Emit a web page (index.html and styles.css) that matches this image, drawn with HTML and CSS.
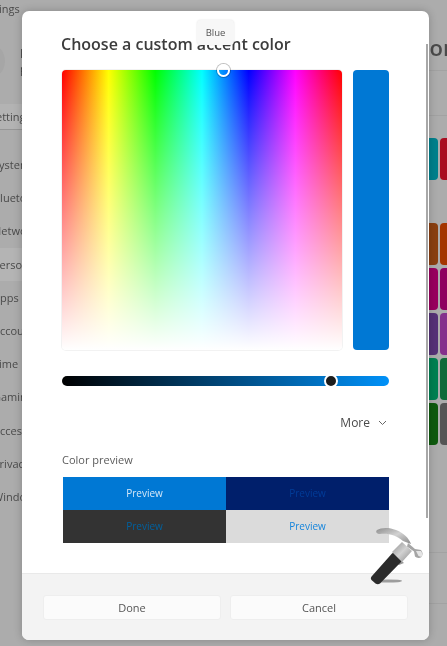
FILE: index.html
```html
<!doctype html>
<html lang="en">
<head>
    <meta charset="UTF-8">
    <title>Choose a custom accent color</title>
    <link rel="stylesheet" href="styles.css">
</head>
<body>

<div class="settings">
    <div class="side">
        <div class="app-title">Settings</div>
        <div class="profile">
            <div class="avatar"></div>
            <div class="profile-text">
                <div class="profile-name">Pat</div>
                <div class="profile-mail">pat@mail</div>
            </div>
        </div>
        <div class="search">Find a setting</div>
        <div class="nav">
            <div class="nav-item">System</div>
            <div class="nav-item">Bluetooth</div>
            <div class="nav-item">Network</div>
            <div class="nav-item active">Personalization</div>
            <div class="nav-item">Apps</div>
            <div class="nav-item">Accounts</div>
            <div class="nav-item">Time</div>
            <div class="nav-item">Gaming</div>
            <div class="nav-item">Access</div>
            <div class="nav-item">Privacy</div>
            <div class="nav-item">Windows</div>
        </div>
    </div>
    <div class="main">
        <div class="page-title">Colors</div>
        <div class="row-top"></div>
        <div class="swatches first">
            <div class="swatch" style="background: #00808c"></div>
            <div class="swatch" style="background: #a80d20"></div>
        </div>
        <div class="swatches">
            <div class="swatch" style="background: #8a3f10"></div>
            <div class="swatch" style="background: #a43500"></div>
            <div class="swatch" style="background: #99005f"></div>
            <div class="swatch" style="background: #8e0060"></div>
            <div class="swatch" style="background: #553177"></div>
            <div class="swatch" style="background: #84308c"></div>
            <div class="swatch" style="background: #008051"></div>
            <div class="swatch" style="background: #0f6a3a"></div>
            <div class="swatch" style="background: #0e5a0e"></div>
            <div class="swatch" style="background: #555555"></div>
        </div>
        <div class="option first-option">Show accent color on Start and taskbar</div>
        <div class="option">Show on title bars and windows borders</div>
    </div>
</div>

<div class="dialog">
    <div class="dialog-body">
        <h2 class="dialog-title">Choose a custom accent color</h2>
        <div class="picker">
            <div class="spectrum">
                <div class="spectrum-thumb"></div>
            </div>
            <div class="current"></div>
        </div>
        <div class="value-slider">
            <div class="value-thumb"></div>
        </div>
        <div class="more">
            <span>More</span>
            <svg class="chevron" width="9" height="6" viewBox="0 0 9 6">
                <path d="M1 1l3.5 3.5L8 1" fill="none" stroke="#666" stroke-width="1"/>
            </svg>
        </div>
        <div class="preview-label">Color preview</div>
        <div class="preview">
            <div class="cell cell-accent">Preview</div>
            <div class="cell cell-navy">Preview</div>
            <div class="cell cell-dark">Preview</div>
            <div class="cell cell-light">Preview</div>
        </div>
    </div>
    <div class="dialog-footer">
        <button class="btn">Done</button>
        <button class="btn">Cancel</button>
    </div>
    <div class="scrollbar"></div>
    <div class="tooltip">Blue</div>
</div>

<!-- hammer watermark -->
<svg class="hammer" width="64" height="62" viewBox="0 0 64 62">
    <defs>
        <linearGradient id="steel" x1="0" y1="0" x2="1" y2="1">
            <stop offset="0" stop-color="#8d8d8d"/>
            <stop offset="0.5" stop-color="#d2d2d2"/>
            <stop offset="1" stop-color="#8a8a8a"/>
        </linearGradient>
    </defs>
    <ellipse cx="20" cy="55" rx="14" ry="1.6" fill="#555" opacity="0.55"/>
    <path d="M28 30l8 7-5 2-6-5z" fill="#9a9a9a"/>
    <path d="M4 50L24 27.500c2-1.500 4-1.500 6 .5l3 3c1.500 2 1 3.500 0 5L12 57.500c-1.500 1-3 1-4.500 0L3.500 54c-1-1.300-.8-2.800.5-4z" fill="#2b2b2b"/>
    <path d="M24 26l10-10 10 9-10 11z" fill="url(#steel)"/>
    <path d="M9 4c4-2.500 12-3 19 0 7 2.500 13 8 15 14l-8-3C28 9 20 7 12 8 9 8 7 6 9 4z" fill="url(#steel)"/>
    <path d="M40 17l7 6 6 1c2 2 2 5 .5 7-2 1.500-5 1-6.500-.5l-1-5-7-5z" fill="#a5a5a5"/>
    <path d="M48 25l5 0c1.500 2 1.500 4 .5 6l-3-1z" fill="#e4e4e4"/>
</svg>

</body>
</html>
```

FILE: styles.css
```css
body {
    margin: 0;
    width: 447px;
    height: 646px;
    overflow: hidden;
    position: relative;
    background: #acacac;
    font-family: "Open Sans", "Noto Sans", sans-serif;
    color: #4a4a4a;
    filter: blur(0.5px);
}

.settings {
    display: flex;
    height: 646px;
    overflow: hidden;
}

.side {
    width: 180px;
    flex-shrink: 0;
    margin-left: -7px;
    margin-right: 7px;
}

.app-title {
    margin-left: -14px;
    padding-top: 1px;
    font-size: 11px;
    line-height: 16px;
}

.profile {
    display: flex;
    gap: 15px;
    margin-top: 20px;
    height: 47px;
    align-items: center;
}

.avatar {
    width: 38px;
    height: 38px;
    margin-left: -26px;
    border-radius: 50%;
    background: #a6a6a6;
}

.profile-name {
    font-size: 12px;
    font-weight: 700;
    line-height: 15px;
}

.profile-mail {
    font-size: 11px;
    line-height: 15px;
}

.search {
    margin: 20px 0 0 -46px;
    height: 26px;
    line-height: 26px;
    padding-left: 10px;
    font-size: 11px;
    background: #b3b3b3;
    border-bottom: 1px solid #969696;
    box-sizing: border-box;
}

.nav {
    margin-top: 18px;
}

.nav-item {
    height: 33.2px;
    line-height: 33.2px;
    font-size: 11px;
}

.nav-item.active {
    background: #b4b4b4;
}

.main {
    flex: 1;
    padding-left: 216px;
}

.page-title {
    margin-top: 32px;
    font-size: 22px;
    font-weight: 600;
    line-height: 30px;
    white-space: nowrap;
}

.row-top {
    height: 44px;
    margin-top: 8px;
    border-top: 1px solid #a2a2a2;
    border-bottom: 1px solid #a2a2a2;
}

.swatches {
    display: grid;
    grid-template-columns: 42px 42px;
    grid-auto-rows: 42px;
    gap: 3px 2px;
}

.swatches.first {
    margin: 22px 0 43px;
}

.swatch {
    border-radius: 4px;
}

.option {
    height: 50px;
    line-height: 50px;
    font-size: 11px;
    white-space: nowrap;
    margin-left: -175px;
    border-top: 1px solid #a2a2a2;
}

.first-option {
    margin-top: 107px;
    line-height: 52px;
}

/* dialog over the settings page */
.dialog {
    position: absolute;
    left: 22px;
    top: 11px;
    width: 407px;
    height: 629px;
    display: flex;
    flex-direction: column;
    background: #fff;
    border-radius: 7px;
    box-shadow: 0 0 9px rgba(0, 0, 0, 0.22);
    overflow: hidden;
}

.dialog-body {
    flex: 1;
    padding: 20px 40px 0 40px;
}

.dialog-title {
    margin: 0 0 0 -1px;
    font-size: 16px;
    font-weight: 600;
    line-height: 26px;
    color: #3c3c3c;
    white-space: nowrap;
}

.picker {
    display: flex;
    gap: 11px;
    margin-top: 13px;
}

.spectrum {
    position: relative;
    width: 280px;
    height: 280px;
    border-radius: 4px;
    background:
        linear-gradient(to bottom, rgba(255, 255, 255, 0), #fff),
        linear-gradient(to right, #f00, #ff0, #0f0, #0ff, #00f, #f0f, #f00);
    box-shadow: 0 0 0 1px rgba(0, 0, 0, 0.05);
}

.spectrum-thumb {
    position: absolute;
    left: 155px;
    top: -6px;
    width: 9px;
    height: 9px;
    border: 2px solid #fff;
    border-radius: 50%;
    box-shadow: 0 0 0 1px rgba(0, 0, 0, 0.25);
}

.current {
    width: 36px;
    height: 280px;
    border-radius: 4px;
    background: #0078d4;
}

.value-slider {
    position: relative;
    height: 10px;
    margin-top: 26px;
    width: 327px;
    border-radius: 5px;
    background: linear-gradient(to right, #000, #0091f8);
}

.value-thumb {
    position: absolute;
    left: 262px;
    top: -2px;
    width: 10px;
    height: 10px;
    background: #1c1c1c;
    border: 2px solid #fff;
    border-radius: 50%;
}

.more {
    display: flex;
    justify-content: flex-end;
    align-items: center;
    gap: 8px;
    width: 325px;
    margin-top: 27px;
    font-size: 12px;
    line-height: 20px;
    color: #4a4a4a;
}

.preview-label {
    margin-top: 19px;
    font-size: 11px;
    line-height: 16px;
    color: #5c5c5c;
}

.preview {
    display: grid;
    grid-template-columns: 163px 163px;
    grid-auto-rows: 33px;
    margin: 9px 0 0 1px;
}

.cell {
    text-align: center;
    font-size: 10px;
    line-height: 33px;
}

.cell-accent {
    background: #0078d4;
    color: #d5e8f8;
}

.cell-navy {
    background: #001f6b;
    color: #003c98;
}

.cell-dark {
    background: #333333;
    color: #00619f;
}

.cell-light {
    background: #dbdbdb;
    color: #1484dc;
}

.dialog-footer {
    height: 67px;
    flex-shrink: 0;
    display: flex;
    gap: 9px;
    box-sizing: border-box;
    padding: 21px 21px 0;
    background: #f3f3f3;
    border-top: 1px solid #e9e9e9;
}

.btn {
    width: 178px;
    height: 25px;
    padding: 0;
    font-family: inherit;
    font-size: 11px;
    color: #555;
    background: #fbfbfb;
    border: 1px solid #eeeeee;
    border-radius: 3px;
}

.scrollbar {
    position: absolute;
    right: 1px;
    top: 33px;
    width: 2px;
    height: 474px;
    background: #a8a8a8;
}

.tooltip {
    position: absolute;
    left: 175px;
    top: 9px;
    width: 37px;
    height: 25px;
    line-height: 25px;
    text-align: center;
    font-size: 9.500px;
    color: #555;
    background: #f7f7f7;
    border-radius: 4px;
    box-shadow: 0 0 2px rgba(0, 0, 0, 0.12);
}

.hammer {
    position: absolute;
    left: 368px;
    top: 526px;
}
```
